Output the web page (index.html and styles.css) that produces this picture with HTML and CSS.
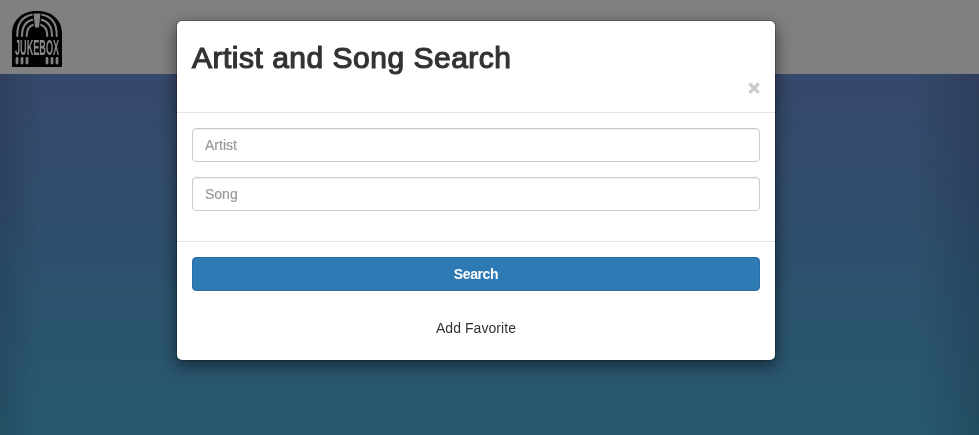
FILE: index.html
```
<!DOCTYPE html>
<html lang="en">
<head>
<meta charset="utf-8">
<title>Jukebox</title>
<link rel="stylesheet" href="styles.css">
</head>
<body>
<header class="navbar">
  <svg class="logo" viewBox="0 0 52 58" role="img" aria-label="Jukebox">
    <path d="M1 56V24C1 9 12 1 26 1s25 8 25 23v32q0 1-1 1H2q-1 0-1-1z"/>
    <g class="arcs">
      <path d="M6.3 26C6 13 12 6 22 4.500M11 26c0-10 4-15 11.500-16.500M15.700 26c0-7 3-10.500 7.500-11.500"/>
      <path d="M45.700 26C46 13 40 6 30 4.500M41 26c0-10-4-15-11.500-16.500M36.300 26c0-7-3-10.500-7.500-11.500"/>
    </g>
    <path class="light" d="M22 3h8l-1.500 15h-5z"/>
    <text transform="translate(4 45) scale(.415 1)">JUKEBOX</text>
    <path class="bars" d="M6 48.500v4.500M11 48.500v4.500M16 48.500v4.500M36 48.500v4.500M41 48.500v4.500M46 48.500v4.500"/>
  </svg>
</header>
<main class="stage"></main>
<div class="backdrop">
  <section class="modal">
    <div class="modal-header">
      <h2>Artist and Song Search</h2>
      <button class="close" type="button">×</button>
    </div>
    <form class="modal-body">
      <input class="field" type="text" placeholder="Artist">
      <input class="field" type="text" placeholder="Song">
    </form>
    <div class="modal-footer">
      <button class="search" type="button">Search</button>
      <p class="favorite">Add Favorite</p>
    </div>
  </section>
</div>
</body>
</html>
```
FILE: styles.css
```
* { box-sizing: border-box; }
body {
  margin: 0;
  height: 435px;
  overflow: hidden;
  display: flex;
  flex-direction: column;
  font: 14px/20px "Liberation Sans", Arial, sans-serif;
  color: #333;
}
.navbar { height: 74px; padding: 10px 11px; background: #808080; }
.logo { display: block; width: 52px; height: 58px; overflow: visible; opacity: .99; will-change: opacity; }
.arcs, .bars { fill: none; stroke: #808080; }
.arcs { stroke-width: 2.1; stroke-linecap: round; }
.bars { stroke-width: 2.8; stroke-linecap: round; }
.light { fill: #858585; stroke: #000; stroke-width: 1; }
.logo text { font: bold 22px "Liberation Sans", sans-serif; fill: #8a8a8a; }
.stage {
  flex: 1;
  background:
    linear-gradient(90deg, rgba(0,0,0,.12), transparent 40px, transparent calc(100% - 65px), rgba(0,0,0,.14)),
    linear-gradient(#36486b, #304d6c 40%, #2c526e 60%, #285970);
}
.backdrop { position: fixed; inset: 0; padding: 20px 0 0 176px; }
.modal {
  width: 600px;
  height: 341px;
  background: #fff;
  background-clip: padding-box;
  border: 1px solid rgba(0,0,0,.2);
  border-radius: 6px;
  box-shadow: 0 5px 15px rgba(0,0,0,.5);
}
.modal-header { height: 92px; padding: 20px 15px 0; border-bottom: 1px solid #e5e5e5; }
h2 {
  width: max-content;
  margin: 0;
  font-size: 30px;
  line-height: 33px;
  font-weight: 400;
  letter-spacing: .5px;
  -webkit-text-stroke: 1.2px #333;
}
.close {
  display: block;
  margin: 4px 0 0 auto;
  padding: 0;
  border: 0;
  background: none;
  font: bold 20px/21px "Liberation Sans", sans-serif;
  color: #ccc;
  -webkit-text-stroke: 1px #ccc;
}
.modal-body { height: 129px; padding: 15px; border-bottom: 1px solid #e5e5e5; }
.field {
  display: block;
  width: 100%;
  height: 34px;
  margin-bottom: 15px;
  padding: 6px 12px;
  border: 1px solid #ccc;
  border-radius: 4px;
  box-shadow: inset 0 1px 1px rgba(0,0,0,.075);
  font: inherit;
}
.field::placeholder { color: #999; opacity: 1; -webkit-text-stroke: .2px #999; }
.modal-footer { padding: 15px; text-align: center; }
.search {
  display: block;
  width: 100%;
  height: 34px;
  padding: 0;
  border: 1px solid #2e6da4;
  border-radius: 4px;
  background: #2e7ab4;
  color: #fff;
  font: bold 14px/20px "Liberation Sans", sans-serif;
  letter-spacing: -.4px;
}
.favorite { margin: 27px 0 0; letter-spacing: .06px; }
```
